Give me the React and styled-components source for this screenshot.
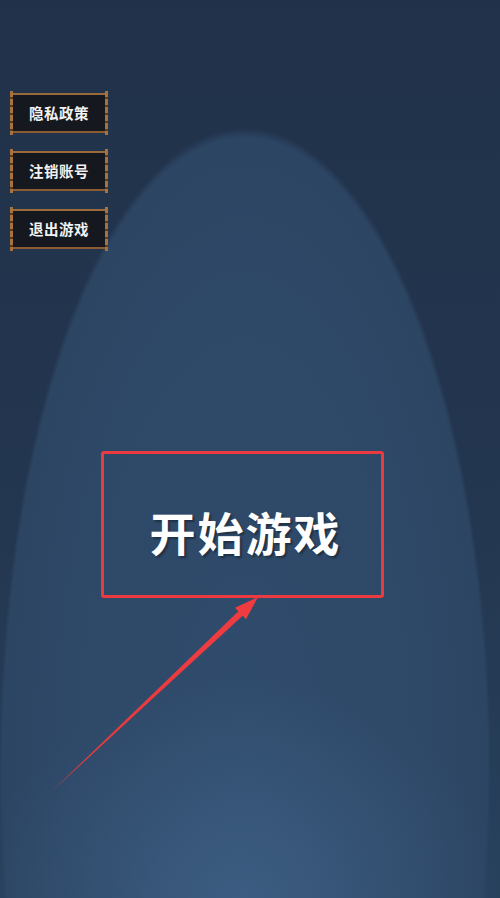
import React from "react";
import styled, { createGlobalStyle } from "styled-components";

const GlobalStyle = createGlobalStyle`
  html, body {
    margin: 0;
    padding: 0;
    background: #21324a;
  }
  * {
    box-sizing: border-box;
  }
`;

const menuItems = ["隐私政策", "注销账号", "退出游戏"];

const Stage = styled.div`
  position: relative;
  width: 500px;
  height: 898px;
  overflow: hidden;
  display: flex;
  flex-direction: column;
  font-family: "Noto Sans CJK SC", "Noto Sans", sans-serif;
  background:
    radial-gradient(ellipse 260px 220px at 240px 898px, rgba(72, 110, 152, 0.5), rgba(72, 110, 152, 0) 100%),
    radial-gradient(ellipse 246px 640px at 245px 768px, #304c6c 0%, #2e4867 70%, #2c4563 98.5%, rgba(44, 69, 99, 0) 100%),
    linear-gradient(180deg, #21314a 0%, #243750 60%, #27415d 100%);
`;

const SideMenu = styled.div`
  display: flex;
  flex-direction: column;
  gap: 18px;
  padding: 93px 0 0 10px;
`;

const WoodButton = styled.button`
  position: relative;
  width: 98px;
  height: 40px;
  padding: 0 0 1px;
  border: none;
  border-top: 2px solid #9a6a3a;
  border-bottom: 2px solid #8a5c30;
  background: #15181e;
  color: #f2f2f2;
  font-family: inherit;
  font-size: 14.5px;
  font-weight: 700;
  letter-spacing: 0.5px;
  cursor: pointer;

  &::before,
  &::after {
    content: "";
    position: absolute;
    top: -4px;
    bottom: -4px;
    width: 3px;
    background: repeating-linear-gradient(
      180deg,
      #a87240 0px,
      #a87240 6px,
      #5c3a1c 6px,
      #5c3a1c 8px
    );
  }
  &::before {
    left: 0;
  }
  &::after {
    right: 0;
  }
`;

const StartBox = styled.div`
  margin: 202px 0 0 101px;
  width: 283px;
  height: 147px;
  border: 3px solid #ec3b40;
  border-radius: 3px;
  display: flex;
  align-items: center;
  justify-content: center;
  padding: 12px 0 0 6px;
`;

const StartLabel = styled.span`
  color: #ffffff;
  font-size: 46px;
  font-weight: 700;
  letter-spacing: 2px;
  text-shadow: 2px 2px 2px rgba(0, 0, 0, 0.35);
`;

const ArrowLayer = styled.svg`
  position: absolute;
  left: 0;
  top: 0;
  pointer-events: none;
`;

const Pointer = () => (
  <ArrowLayer width="500" height="898" viewBox="0 0 500 898">
    <defs>
      <linearGradient id="shaft" x1="48" y1="795" x2="258" y2="597" gradientUnits="userSpaceOnUse">
        <stop offset="0" stopColor="#e8393e" stopOpacity="0.45" />
        <stop offset="0.12" stopColor="#e8393e" stopOpacity="1" />
        <stop offset="1" stopColor="#f03c40" />
      </linearGradient>
    </defs>
    <polygon
      points="48,795 242.6,615.7 250,606 238.4,611.3"
      fill="url(#shaft)"
    />
    <polygon points="258,597 235,607.7 246,619.3" fill="#f03c40" />
  </ArrowLayer>
);

export default function App() {
  return (
    <>
      <GlobalStyle />
      <Stage>
        <SideMenu>
          {menuItems.map((label) => (
            <WoodButton key={label}>{label}</WoodButton>
          ))}
        </SideMenu>
        <StartBox>
          <StartLabel>开始游戏</StartLabel>
        </StartBox>
        <Pointer />
      </Stage>
    </>
  );
}
